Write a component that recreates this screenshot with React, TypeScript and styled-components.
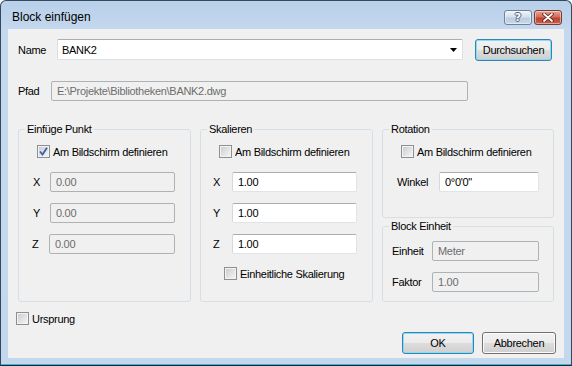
import styled, {createGlobalStyle} from 'styled-components';

// -----------------------------------------------------------------------------

const GlobalStyle = createGlobalStyle`
  html, body {
    margin: 0;
    padding: 0;
    background: #ffffff;
  }

  body {
    width: 572px;
    height: 366px;
    overflow: hidden;
    font-family: 'Liberation Sans', Arial, sans-serif;
    font-size: 11px;
    color: #000000;
  }
`;

// -----------------------------------------------------------------------------

const Window = styled.div`
  width: 572px;
  height: 366px;
  box-sizing: border-box;
  display: flex;
  flex-direction: column;
  border: 1px solid #34495e;
  border-bottom-color: #0b2b36;
  border-radius: 6px 6px 0 0;
  background: linear-gradient(#b9d0ea 0px, #c4d8ee 30px, #c3d7ed 100%);
  box-shadow: inset 0 -1px 0 #3fb6d6;
`;

const TitleBar = styled.div`
  height: 28px;
  box-sizing: border-box;
  display: flex;
  align-items: flex-start;
  padding: 9px 9px 0 11px;
`;

const Title = styled.div`
  flex: 1;
  font-size: 12px;
  line-height: 14px;
  color: #000000;
`;

const CaptionButton = styled.div<{$close?: boolean}>`
  width: 28px;
  height: 15px;
  box-sizing: border-box;
  margin-left: 2px;
  border-radius: 3px;
  display: flex;
  align-items: center;
  justify-content: center;
  border: 1px solid ${p => (p.$close ? '#7f3a30' : '#6d8299')};
  background: ${p =>
    p.$close
      ? 'linear-gradient(#e6a193 0%, #d0705f 45%, #bd4330 55%, #c6604c 100%)'
      : 'linear-gradient(#eef3f9 0%, #d5e1ee 45%, #bccde0 55%, #c9d8e8 100%)'};
  box-shadow: inset 0 0 0 1px rgba(255, 255, 255, 0.45);
`;

const HelpGlyph = styled.span`
  font-family: 'DejaVu Sans', sans-serif;
  font-weight: bold;
  font-size: 11px;
  line-height: 11px;
  color: #ffffff;
  text-shadow:
    1px 0 0 #4d627a,
    -1px 0 0 #4d627a,
    0 1px 0 #4d627a,
    0 -1px 0 #4d627a;
`;

const Client = styled.div`
  flex: 1;
  margin: 0 7px 7px 7px;
  background: #f0f0f0;
  display: flex;
  flex-direction: column;
  padding: 10px 10px 0 10px;
  letter-spacing: -0.3px;
`;

const FormRow = styled.div<{$top?: number; $height: number}>`
  display: flex;
  align-items: center;
  height: ${p => p.$height}px;
  margin-top: ${p => p.$top || 0}px;
`;

const Label = styled.div<{$width: number}>`
  width: ${p => p.$width}px;
  flex-shrink: 0;
`;

const Combo = styled.div`
  width: 406px;
  height: 21px;
  box-sizing: border-box;
  margin-right: 12px;
  display: flex;
  align-items: center;
  padding: 0 5px 0 4px;
  background: #ffffff;
  border: 1px solid #dcdfe4;
  border-top-color: #abadb3;
  border-radius: 2px;
`;

const ComboText = styled.div`
  flex: 1;
`;

const Field = styled.input<{$width: number}>`
  width: ${p => p.$width}px;
  height: 20px;
  box-sizing: border-box;
  margin: 0;
  padding: 0 0 0 5px;
  font-family: 'Liberation Sans', Arial, sans-serif;
  font-size: 11px;
  letter-spacing: -0.3px;
  outline: none;
  border-radius: 2px;
  color: #000000;
  background: #ffffff;
  border: 1px solid #e0e3e8;
  border-top-color: #abadb3;
  border-left-color: #d5d8dd;

  &:disabled {
    color: #6d6d6d;
    background: #f0f0f0;
    border-color: #adb2b5;
  }
`;

const Button = styled.div<{$width: number; $default?: boolean}>`
  width: ${p => p.$width}px;
  height: 22px;
  box-sizing: border-box;
  display: flex;
  align-items: center;
  justify-content: center;
  border-radius: 3px;
  border: 1px solid ${p => (p.$default ? '#3c7fb1' : '#707070')};
  background: linear-gradient(#f2f2f2 0%, #ebebeb 50%, #dddddd 50%, #cfcfcf 100%);
  box-shadow: inset 0 0 0 1px ${p => (p.$default ? '#7fe0f7' : '#fbfbfb')};
`;

const Groups = styled.div`
  display: grid;
  grid-template-columns: 173px 173px 172px;
  column-gap: 9px;
  margin-top: 28px;
  height: 173px;
`;

const Column = styled.div`
  display: flex;
  flex-direction: column;
  gap: 8px;
`;

const Group = styled.div<{$height: number}>`
  position: relative;
  height: ${p => p.$height}px;
  box-sizing: border-box;
  border: 1px solid #d5dfe5;
  border-radius: 3px;
  display: flex;
  flex-direction: column;
`;

const Caption = styled.div`
  position: absolute;
  top: -8px;
  left: 6px;
  padding: 0 2px;
  line-height: 14px;
  background: #f0f0f0;
`;

const CheckRow = styled.div<{$top: number; $left: number}>`
  display: flex;
  align-items: center;
  height: 13px;
  margin-top: ${p => p.$top}px;
  margin-left: ${p => p.$left}px;
`;

const Box = styled.div`
  width: 13px;
  height: 13px;
  box-sizing: border-box;
  flex-shrink: 0;
  margin-right: 3px;
  border: 1px solid #8e8f8f;
  box-shadow: inset 0 0 0 1px #f3f3f3;
  background: linear-gradient(135deg, #c6c9ce 0%, #e2e3e6 55%, #f7f7f7 100%);
  display: flex;
  align-items: center;
  justify-content: center;
`;

const FieldRow = styled.div<{$top: number; $left: number}>`
  display: flex;
  align-items: center;
  margin-top: ${p => p.$top}px;
  padding-left: ${p => p.$left}px;
`;

const Footer = styled.div`
  display: flex;
  justify-content: flex-end;
  gap: 8px;
  margin-top: 7px;
  margin-right: -2px;
`;

// -----------------------------------------------------------------------------

const Check = ({checked = false}: {checked?: boolean}) => (
  <Box>
    {checked && (
      <svg width="9" height="9" viewBox="0 0 9 9">
        <path
          d="M1 4.5 L3.5 7.5 L8 0.8"
          fill="none"
          stroke="#3d5ea8"
          strokeWidth="1.8"
        />
      </svg>
    )}
  </Box>
);

const CheckItem = ({
  label,
  top,
  left,
  checked
}: {
  label: string;
  top: number;
  left: number;
  checked?: boolean;
}) => (
  <CheckRow $top={top} $left={left}>
    <Check checked={checked} />
    {label}
  </CheckRow>
);

const FieldItem = ({
  label,
  value,
  top,
  left,
  labelWidth,
  width,
  disabled
}: {
  label: string;
  value: string;
  top: number;
  left: number;
  labelWidth: number;
  width: number;
  disabled?: boolean;
}) => (
  <FieldRow $top={top} $left={left}>
    <Label $width={labelWidth}>{label}</Label>
    <Field $width={width} value={value} disabled={disabled} readOnly />
  </FieldRow>
);

// -----------------------------------------------------------------------------

const App = () => (
  <>
    <GlobalStyle />
    <Window>
      <TitleBar>
        <Title>Block einfügen</Title>
        <CaptionButton>
          <HelpGlyph>?</HelpGlyph>
        </CaptionButton>
        <CaptionButton $close>
          <svg width="14" height="9" viewBox="0 0 14 9">
            <path
              d="M3 1 L11 8 M11 1 L3 8"
              stroke="#5a1f17"
              strokeWidth="3.4"
              strokeLinecap="round"
            />
            <path
              d="M3 1 L11 8 M11 1 L3 8"
              stroke="#ffffff"
              strokeWidth="1.8"
              strokeLinecap="round"
            />
          </svg>
        </CaptionButton>
      </TitleBar>

      <Client>
        <FormRow $height={21}>
          <Label $width={39}>Name</Label>
          <Combo>
            <ComboText>BANK2</ComboText>
            <svg width="7" height="4" viewBox="0 0 7 4">
              <path d="M0 0 H7 L3.5 4 Z" fill="#000000" />
            </svg>
          </Combo>
          <Button $width={77} $default>
            Durchsuchen
          </Button>
        </FormRow>

        <FormRow $top={21} $height={20}>
          <Label $width={33}>Pfad</Label>
          <Field
            $width={417}
            value="E:\Projekte\Bibliotheken\BANK2.dwg"
            disabled
            readOnly
          />
        </FormRow>

        <Groups>
          <Group $height={173}>
            <Caption>Einfüge Punkt</Caption>
            <CheckItem label="Am Bildschirm definieren" top={15} left={18} checked />
            <FieldItem label="X" value="0.00" top={14} left={14} labelWidth={17} width={125} disabled />
            <FieldItem label="Y" value="0.00" top={11} left={14} labelWidth={17} width={125} disabled />
            <FieldItem label="Z" value="0.00" top={11} left={13} labelWidth={17} width={126} disabled />
          </Group>

          <Group $height={173}>
            <Caption>Skalieren</Caption>
            <CheckItem label="Am Bildschirm definieren" top={15} left={18} />
            <FieldItem label="X" value="1.00" top={14} left={12} labelWidth={19} width={125} />
            <FieldItem label="Y" value="1.00" top={11} left={12} labelWidth={19} width={125} />
            <FieldItem label="Z" value="1.00" top={11} left={12} labelWidth={19} width={125} />
            <CheckItem label="Einheitliche Skalierung" top={13} left={23} />
          </Group>

          <Column>
            <Group $height={89}>
              <Caption>Rotation</Caption>
              <CheckItem label="Am Bildschirm definieren" top={15} left={18} />
              <FieldItem label="Winkel" value={'0°0\'0"'} top={14} left={14} labelWidth={42} width={100} />
            </Group>
            <Group $height={76}>
              <Caption>Block Einheit</Caption>
              <FieldItem label="Einheit" value="Meter" top={14} left={9} labelWidth={40} width={107} disabled />
              <FieldItem label="Faktor" value="1.00" top={11} left={9} labelWidth={40} width={107} disabled />
            </Group>
          </Column>
        </Groups>

        <CheckItem label="Ursprung" top={10} left={-2} />

        <Footer>
          <Button $width={72} $default>
            OK
          </Button>
          <Button $width={74}>Abbrechen</Button>
        </Footer>
      </Client>
    </Window>
  </>
);

// -----------------------------------------------------------------------------

export default App;
